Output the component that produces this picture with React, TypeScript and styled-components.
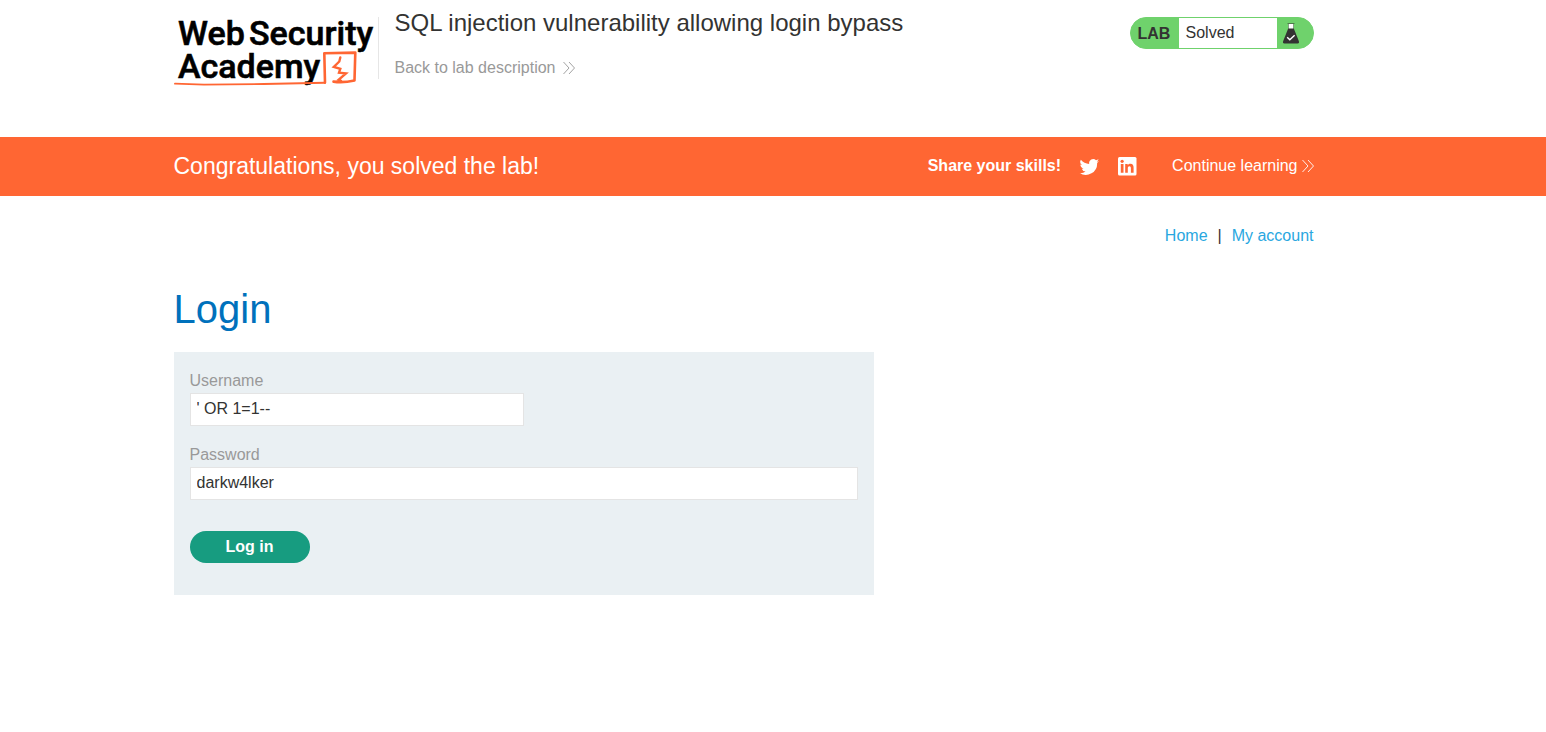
import React from "react";
import styled, { createGlobalStyle } from "styled-components";

const GlobalStyle = createGlobalStyle`
  *, *::before, *::after { box-sizing: border-box; }
  body {
    margin: 0;
    background: #fff;
    color: #333332;
    font-family: "Liberation Sans", Arial, sans-serif;
    font-size: 16px;
    line-height: 24px;
  }
  a { text-decoration: none; }
`;

const Container = styled.div`
  width: 100%;
  max-width: 1199px;
  margin: 0 auto;
  padding-right: 59px;
`;

const HeaderRow = styled(Container)`
  display: flex;
  align-items: flex-start;
  padding-top: 8px;
  padding-bottom: 51px;
`;

const LogoLink = styled.a`
  display: block;
  flex: none;
  width: 205px;
  height: 62px;
  margin-top: 9px;
  border-right: 1px solid #e6e6e6;
`;

const LogoSvg = styled.svg`
  display: block;
  overflow: visible;
`;

const LogoText = styled.text`
  font-family: Roboto, sans-serif;
  font-size: 34px;
  font-weight: 500;
  stroke: #000;
  stroke-width: 0.6px;
`;

const TitleBlock = styled.div`
  flex: 1;
  height: 78px;
  padding-left: 16px;
`;

const Title = styled.h2`
  margin: 0 0 17px;
  font-size: 24px;
  line-height: 30px;
  font-weight: 400;
`;

const BackLink = styled.a`
  display: inline-flex;
  align-items: center;
  gap: 8px;
  color: #999;
  line-height: 26px;
`;

const Status = styled.div`
  display: flex;
  width: 184px;
  height: 32px;
  margin-top: 9px;
  overflow: hidden;
  border: 1px solid #6fd26c;
  border-radius: 16px;
  background: #6fd26c;
  line-height: 30px;
`;

const StatusTag = styled.span`
  width: 48px;
  padding-left: 7px;
  font-weight: 700;
  line-height: 32px;
`;

const StatusText = styled.span`
  flex: 1;
  padding-left: 7px;
  background: #fff;
`;

const StatusIcon = styled.span`
  width: 36px;
  padding: 5px 0 0 5px;
`;

const Banner = styled.section`
  background: #ff6633;
  color: #fff;
`;

const BannerRow = styled(Container)`
  display: flex;
  align-items: center;
  min-height: 59px;
  padding-bottom: 2px;
`;

const BannerTitle = styled.h4`
  flex: 1;
  margin: 0;
  font-size: 23px;
  font-weight: 400;
`;

const Share = styled.div`
  display: flex;
  align-items: center;
  gap: 18px;
  margin-right: 35px;
  font-weight: 700;
`;

const IconLink = styled.a`
  display: block;
  width: 20px;
  height: 20px;
  color: #fff;
`;

const ContinueLink = styled.a`
  display: flex;
  align-items: center;
  gap: 4px;
  color: #fff;
`;

const Nav = styled.nav`
  display: flex;
  justify-content: flex-end;
  gap: 10px;
  padding-top: 28px;
  a { color: #29a7df; }
`;

const Heading = styled.h1`
  margin: 36px 0 18px;
  color: #0071bc;
  font-size: 40px;
  line-height: 50px;
  font-weight: 400;
`;

const LoginForm = styled.form`
  display: flex;
  flex-direction: column;
  align-items: flex-start;
  max-width: 700px;
  padding: 16px 16px 32px;
  background: #eaf0f3;
`;

const Label = styled.label`
  color: #999;
  line-height: 25px;
`;

const Input = styled.input<{ $wide?: boolean }>`
  width: ${(p) => (p.$wide ? "100%" : "50%")};
  height: 33px;
  margin: 0 0 16px;
  padding: 0 6px 2px;
  border: 1px solid #e4e4e4;
  border-radius: 0;
  background: #fff;
  color: #333332;
  font: inherit;
  outline: none;
`;

const Submit = styled.button`
  width: 120px;
  height: 32px;
  margin-top: 15px;
  padding: 0;
  border: 0;
  border-radius: 16px;
  background: #179c80;
  color: #fff;
  font: inherit;
  font-weight: 700;
`;

function Chevrons() {
  return (
    <svg width="12" height="14" viewBox="0 0 12 14" fill="none" stroke="currentColor" strokeWidth="0.9" aria-hidden="true">
      <path d="M0.5 1 L6 7 L0.5 13 M6 1 L11.5 7 L6 13" />
    </svg>
  );
}

function Logo() {
  return (
    <LogoSvg width="200" height="70" viewBox="0 0 200 70" role="img" aria-label="Web Security Academy">
      <LogoText x="4" y="28">Web</LogoText>
      <LogoText x="75" y="28">Security</LogoText>
      <LogoText x="4" y="61">Academy</LogoText>
      <g fill="none" stroke="#ff6633" strokeLinejoin="round" strokeLinecap="round">
        <path strokeWidth="2.6" d="M151 65.6 L150.3 36.3 L181.3 35.6 L180.5 63.5 Q169 66 159.5 64.6" />
        <path strokeWidth="1.9" d="M1 66.6 L30 67.6 L90 67 L151 65.8" />
        <path strokeWidth="2.4" strokeLinejoin="miter" d="M166.3 40.5 L165.3 44.5 L159.8 50 L166.3 51.8 L165 55.6 L172 56.3 L164.5 62.8 L167 63.8" />
      </g>
    </LogoSvg>
  );
}

export default function App() {
  return (
    <>
      <GlobalStyle />
      <header>
        <HeaderRow>
          <LogoLink href="#"><Logo /></LogoLink>
          <TitleBlock>
            <Title>SQL injection vulnerability allowing login bypass</Title>
            <BackLink href="#">Back to lab description <Chevrons /></BackLink>
          </TitleBlock>
          <Status>
            <StatusTag>LAB</StatusTag>
            <StatusText>Solved</StatusText>
            <StatusIcon>
              <svg width="18" height="21" viewBox="0 0 18 21" display="block" aria-hidden="true">
                <path fill="#fff" d="M6.5 1h5v6h-5z" />
                <path fill="#333332" fillOpacity="0.55" d="M5.5 0h7v1h-7zM6 1h0.7v5H6zM11.3 1h0.7v5h-0.7z" />
                <path fill="#333332" d="M6.2 5.5h5.6l5 12.5q.8 2.5-1.2 2.5H2.4q-2 0-1.2-2.5z" />
                <path fill="none" stroke="#fff" strokeWidth="1.4" d="M5.2 14.2l2.6 2.6 4.8-4.6" />
              </svg>
            </StatusIcon>
          </Status>
        </HeaderRow>
      </header>
      <Banner>
        <BannerRow>
          <BannerTitle>Congratulations, you solved the lab!</BannerTitle>
          <Share>
            <span>Share your skills!</span>
            <IconLink href="#" aria-label="Share on Twitter">
              <svg width="20" height="20" viewBox="0 -0.5 23.5 23.5" fill="currentColor" aria-hidden="true">
                <path d="M23.6 5.2a9.3 9.3 0 0 1-2.7.8 4.7 4.7 0 0 0 2.1-2.6 9.4 9.4 0 0 1-3 1.1 4.7 4.7 0 0 0-8 4.3A13.4 13.4 0 0 1 2.2 3.9a4.7 4.7 0 0 0 1.5 6.3 4.7 4.7 0 0 1-2.1-.6c0 2.3 1.5 4.2 3.8 4.7a4.7 4.7 0 0 1-2.1.1 4.7 4.7 0 0 0 4.4 3.3A9.5 9.5 0 0 1 .7 19.6a13.4 13.4 0 0 0 20.6-12z" />
              </svg>
            </IconLink>
            <IconLink href="#" aria-label="Share on LinkedIn">
              <svg width="20" height="20" viewBox="0 0 20 20" aria-hidden="true">
                <rect x="1" y="1" width="18.5" height="18.5" rx="1.5" fill="#fff" />
                <path fill="#ff6633" d="M3.8 8h2.7v8.8H3.8zM8.2 8h2.5v1.2c.5-.8 1.4-1.4 2.7-1.4 2.6 0 3.2 1.7 3.2 4v5h-2.7v-4.3c0-1.200-.1-2.300-1.500-2.300s-1.600 1.100-1.600 2.200v4.400H8.200z" />
                <circle cx="5.15" cy="5.3" r="1.6" fill="#ff6633" />
              </svg>
            </IconLink>
          </Share>
          <ContinueLink href="#">Continue learning <Chevrons /></ContinueLink>
        </BannerRow>
      </Banner>
      <Container as="main">
        <Nav>
          <a href="#">Home</a>
          <span>|</span>
          <a href="#">My account</a>
        </Nav>
        <Heading>Login</Heading>
        <LoginForm onSubmit={(e) => e.preventDefault()}>
          <Label htmlFor="username">Username</Label>
          <Input id="username" type="text" defaultValue="' OR 1=1--" />
          <Label htmlFor="password">Password</Label>
          <Input id="password" type="text" defaultValue="darkw4lker" $wide />
          <Submit type="submit">Log in</Submit>
        </LoginForm>
      </Container>
    </>
  );
}
